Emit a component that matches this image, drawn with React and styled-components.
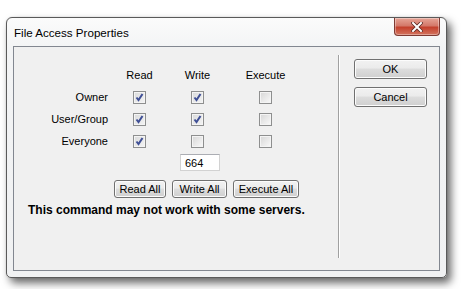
import React from "react";
import styled, { createGlobalStyle } from "styled-components";

const GlobalStyle = createGlobalStyle`
  html, body {
    margin: 0;
    padding: 0;
    background: #ffffff;
    font-family: "Liberation Sans", Arial, sans-serif;
    font-size: 11px;
    color: #000;
  }
`;

const Page = styled.div`
  padding: 17px 0 0 6px;
  width: 464px;
  height: 289px;
  box-sizing: border-box;
  overflow: hidden;
`;

const Window = styled.div`
  width: 441px;
  height: 261px;
  box-sizing: border-box;
  border: 1px solid #5a5a5a;
  border-radius: 6px 6px 5px 5px;
  background: linear-gradient(#fbfbfb, #f3f4f5 30px, #f0f1f2);
  box-shadow: 4px 5px 9px rgba(0, 0, 0, 0.6), 0 0 1px rgba(0, 0, 0, 0.3);
  display: flex;
  flex-direction: column;
`;

const TitleBar = styled.div`
  height: 28px;
  display: flex;
  justify-content: space-between;
  align-items: flex-start;
  padding: 0 6px 0 7px;
`;

const Title = styled.div`
  font-size: 11.6px;
  line-height: 14px;
  padding-top: 8px;
  color: #000;
`;

const CloseButton = styled.div`
  width: 46px;
  height: 18px;
  box-sizing: border-box;
  border: 1px solid #7e3a33;
  border-top: none;
  border-radius: 0 0 4px 4px;
  background: linear-gradient(#e6a597, #d4796a 45%, #c4412d 55%, #d3745f);
  box-shadow: inset 0 0 0 1px rgba(255, 255, 255, 0.35);
  display: flex;
  align-items: center;
  justify-content: center;
`;

const Client = styled.div`
  flex: 1;
  margin: 0 6px 6px 6px;
  border: 1px solid #828790;
  background: #f0f0f0;
  display: flex;
`;

const MainPanel = styled.div`
  width: 324px;
  padding-top: 17px;
  display: flex;
  flex-direction: column;
`;

const Grid = styled.div`
  display: grid;
  grid-template-columns: 104px 43px 73px 63px;
  grid-auto-rows: 22px;
  align-items: center;
`;

const Header = styled.div`
  text-align: center;
  color: #000;
`;

const RowLabel = styled.div`
  text-align: right;
  padding-right: 10px;
`;

const Cell = styled.div`
  display: flex;
  justify-content: center;
  align-items: center;
`;

const Box = styled.span`
  width: 13px;
  height: 13px;
  box-sizing: border-box;
  border: 1px solid #8e8f8f;
  background: ${(p) =>
    p.checked
      ? "linear-gradient(135deg, #d9dadb, #f4f4f4)"
      : "linear-gradient(135deg, #d6d6d6, #fafafa)"};
  box-shadow: inset 0 0 0 1px #f4f4f4;
  display: flex;
  align-items: center;
  justify-content: center;
`;

const ModeInput = styled.div`
  width: 40px;
  height: 17px;
  box-sizing: border-box;
  border: 1px solid #d2d2d2;
  border-top-color: #abadb3;
  background: #fff;
  padding: 2px 0 0 4px;
  font-size: 11px;
  line-height: 13px;
`;

const InputRow = styled.div`
  display: flex;
  padding-left: 166px;
  margin-top: 2px;
`;

const ButtonRow = styled.div`
  display: flex;
  gap: 6px;
  padding-left: 100px;
  margin-top: 9px;
`;

const Button = styled.button`
  width: ${(p) => p.w}px;
  height: ${(p) => p.h || 18}px;
  box-sizing: border-box;
  border: 1px solid #707070;
  border-radius: 3px;
  background: linear-gradient(#f2f2f2, #ebebeb 45%, #dddddd 50%, #cfcfcf);
  box-shadow: inset 0 0 0 1px #fcfcfc;
  font-family: "Liberation Sans", Arial, sans-serif;
  font-size: 11px;
  color: #000;
  padding: 0;
  display: flex;
  align-items: center;
  justify-content: center;
`;

const Warning = styled.div`
  font-weight: bold;
  font-size: 12px;
  padding-left: 14px;
  margin-top: 5px;
`;

const Separator = styled.div`
  width: 1px;
  background: #a0a0a0;
  border-right: 1px solid #ffffff;
  margin: 8px 0 12px 0;
`;

const SidePanel = styled.div`
  display: flex;
  flex-direction: column;
  gap: 8px;
  padding: 12px 0 0 14px;
`;

const Check = ({ checked }) => (
  <Box checked={checked}>
    {checked && (
      <svg width="9" height="9" viewBox="0 0 9 9">
        <path d="M1.5 4.5 L3.5 7 L7.5 1" fill="none" stroke="#3f4f95" strokeWidth="2" />
      </svg>
    )}
  </Box>
);

const rows = [
  { name: "Owner", perms: [true, true, false] },
  { name: "User/Group", perms: [true, true, false] },
  { name: "Everyone", perms: [true, false, false] },
];

export default function App() {
  return (
    <Page>
      <GlobalStyle />
      <Window>
        <TitleBar>
          <Title>File Access Properties</Title>
          <CloseButton>
            <svg width="12" height="10" viewBox="0 0 12 10">
              <path d="M2 1 L10 9 M10 1 L2 9" stroke="#5d2a22" strokeWidth="3.6" strokeLinecap="square" />
              <path d="M2 1 L10 9 M10 1 L2 9" stroke="#ffffff" strokeWidth="2" strokeLinecap="square" />
            </svg>
          </CloseButton>
        </TitleBar>
        <Client>
          <MainPanel>
            <Grid>
              <span />
              <Header>Read</Header>
              <Header>Write</Header>
              <Header>Execute</Header>
              {rows.map((r) => (
                <React.Fragment key={r.name}>
                  <RowLabel>{r.name}</RowLabel>
                  {r.perms.map((c, i) => (
                    <Cell key={i}>
                      <Check checked={c} />
                    </Cell>
                  ))}
                </React.Fragment>
              ))}
            </Grid>
            <InputRow>
              <ModeInput>664</ModeInput>
            </InputRow>
            <ButtonRow>
              <Button w={52}>Read All</Button>
              <Button w={55}>Write All</Button>
              <Button w={66}>Execute All</Button>
            </ButtonRow>
            <Warning>This command may not work with some servers.</Warning>
          </MainPanel>
          <Separator />
          <SidePanel>
            <Button w={73} h={20}>OK</Button>
            <Button w={73} h={20}>Cancel</Button>
          </SidePanel>
        </Client>
      </Window>
    </Page>
  );
}
